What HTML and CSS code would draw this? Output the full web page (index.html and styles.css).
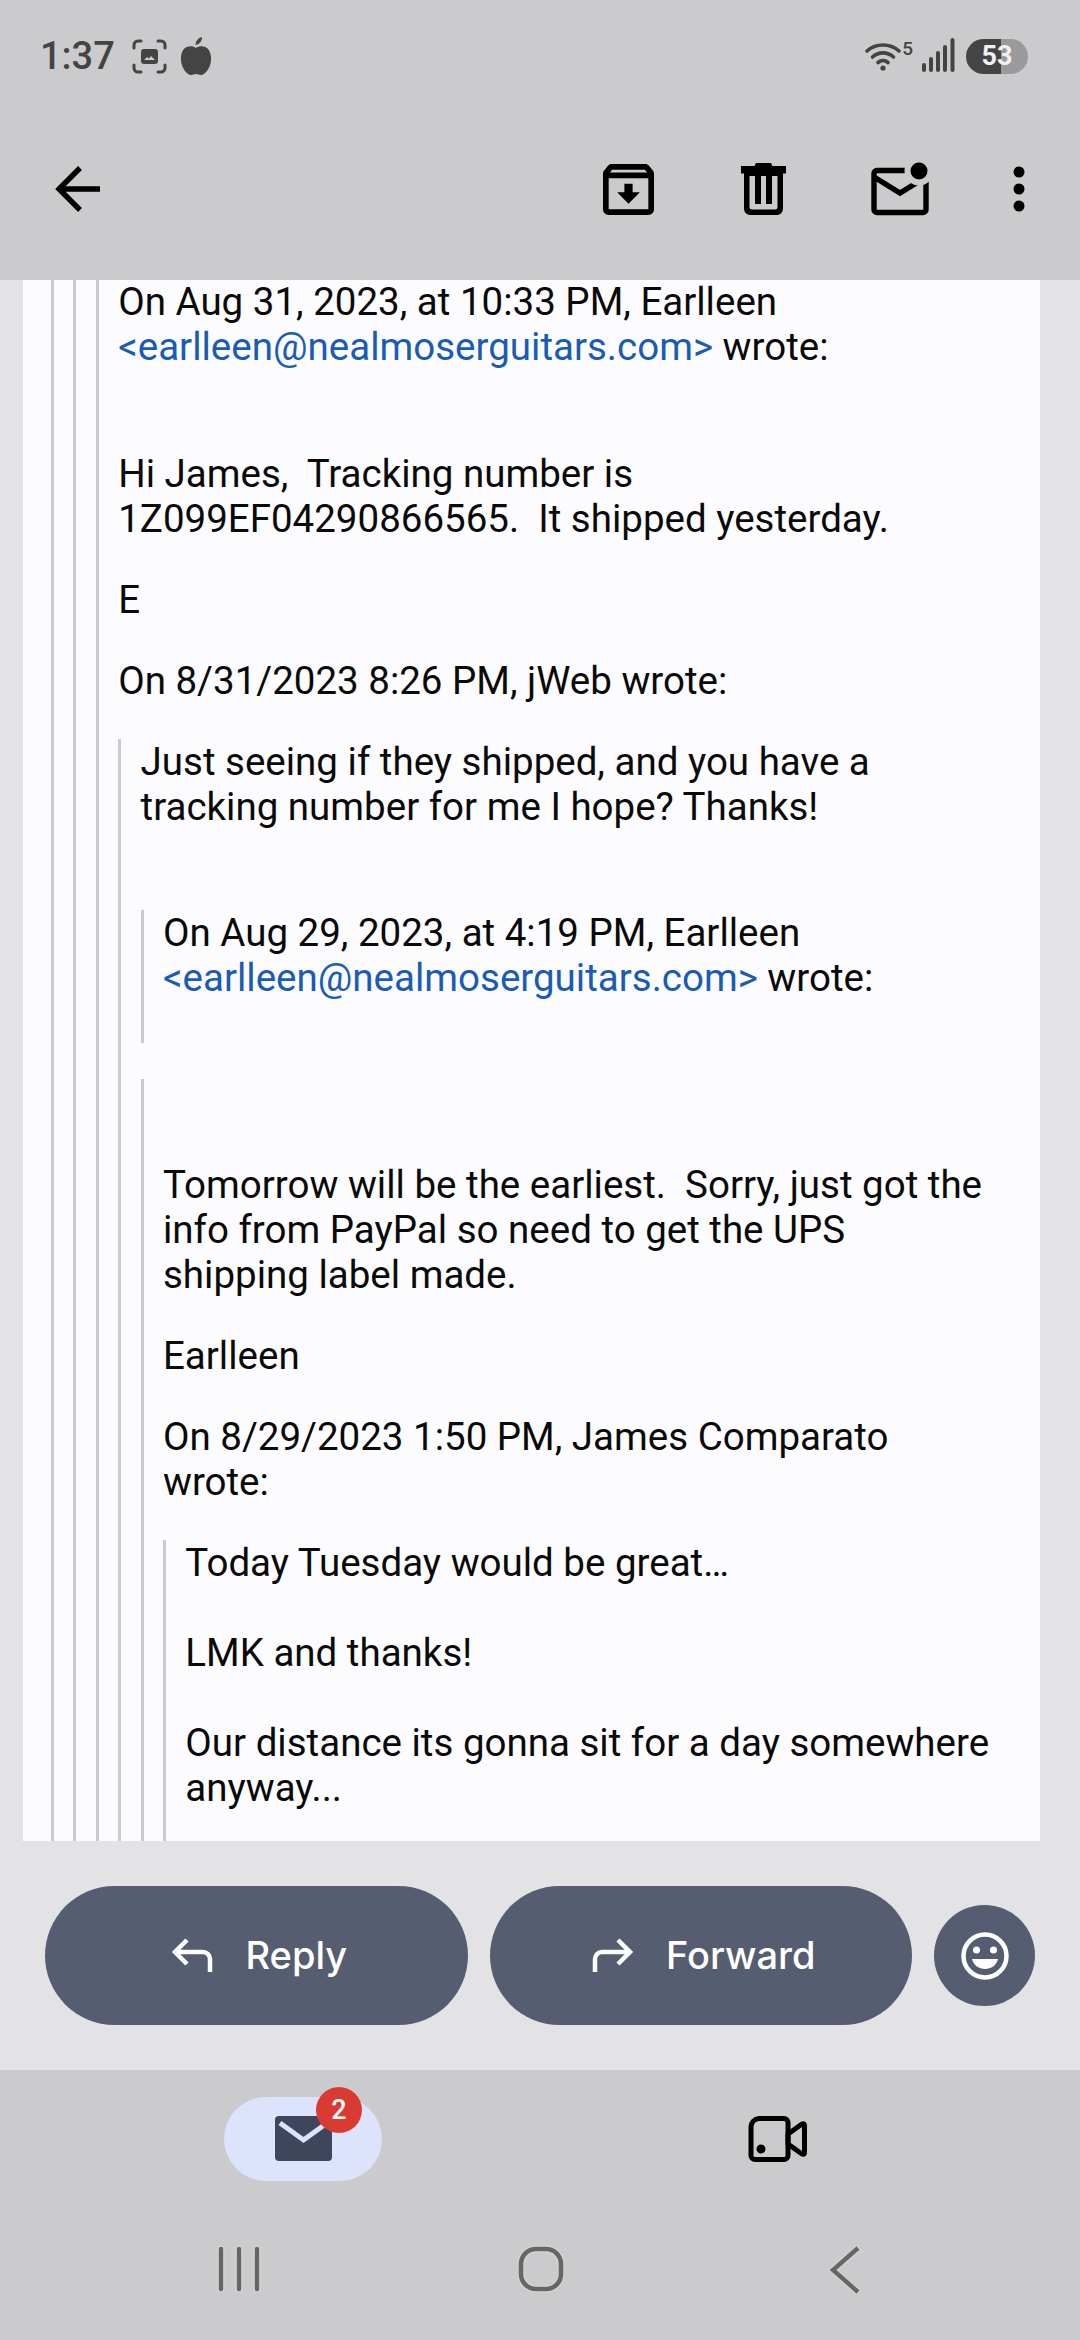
FILE: index.html
```html
<!DOCTYPE html>
<html lang="en">
<head>
    <meta charset="UTF-8">
    <title>Mail</title>
    <link rel="stylesheet" href="styles.css">
</head>
<body>

<div id="app">
    <div id="topArea">
        <div id="statusBar">
            <div class="statusLeft">
                <span id="clock">1:37</span>
                <svg class="shotIcon" viewBox="0 0 35 35" fill="none" stroke="#444" stroke-width="3" stroke-linecap="round">
                    <path d="M2 9V6a4 4 0 0 1 4-4h3M26 2h3a4 4 0 0 1 4 4v3M33 26v3a4 4 0 0 1-4 4h-3M9 33H6a4 4 0 0 1-4-4v-3"/>
                    <rect x="9" y="10" width="17" height="15" rx="3" fill="#444" stroke="none"/>
                    <path d="M12 21l3-3 2 1.500 2-2.500 4 4z" fill="#cbcbcd" stroke="none"/>
                </svg>
                <svg class="appleIcon" viewBox="0 0 32 38" fill="#444">
                    <path d="M16 11C12 8 2 8 1 20c-1 10 6 18 10 18 2 0 3-1 5-1s3 1 5 1c4 0 11-8 10-18C30 8 20 8 16 11z"/>
                    <path d="M15.500 8c0-4 2.500-7 6.500-8 0 4-2 7-6.500 8z"/>
                </svg>
            </div>
            <div class="statusRight">
                <svg class="wifiIcon" viewBox="0 0 36 30" fill="none" stroke="#444" stroke-width="3.600" stroke-linecap="round">
                    <path d="M2 10c9-8 23-8 32 0"/>
                    <path d="M7.500 16c6-5.500 15-5.500 21 0"/>
                    <path d="M13 21.500c3-2.500 7-2.500 10 0"/>
                    <circle cx="18" cy="27" r="2.600" fill="#444" stroke="none"/>
                </svg>
                <span class="wifiNum">5</span>
                <svg class="signalIcon" viewBox="0 0 33 34" fill="#444">
                    <rect x="0" y="25" width="4" height="9" rx="2"/>
                    <rect x="7" y="19" width="4" height="15" rx="2"/>
                    <rect x="14" y="13" width="4" height="21" rx="2"/>
                    <rect x="21" y="7" width="4" height="27" rx="2"/>
                    <rect x="28.500" y="0" width="4" height="34" rx="2"/>
                </svg>
                <div id="battery"><span>53</span></div>
            </div>
        </div>
        <div id="toolbar">
            <svg class="backIcon" viewBox="0 0 48 48" fill="none" stroke="#000" stroke-width="5.400">
                <path d="M46 24H5M26 3L5 24l21 21"/>
            </svg>
            <div class="toolIcons">
                <svg class="tool" viewBox="3 3 18 18" width="51" height="51" fill="#000">
                    <path d="M20.540 5.230l-1.390-1.680C18.880 3.210 18.470 3 18 3H6c-.47 0-.88.21-1.160.55L3.460 5.230C3.170 5.570 3 6.020 3 6.500V19c0 1.100.9 2 2 2h14c1.100 0 2-.9 2-2V6.500c0-.48-.17-.93-.46-1.270zM6.240 5h11.520l.83 1H5.420l.82-1zM5 19V8h14v11H5zm8.450-9h-2.900v3H8l4 4 4-4h-2.550z"/>
                </svg>
                <svg class="tool" viewBox="0 0 45 52" width="45" height="52" fill="#000">
                    <path d="M15 0h15l1.500 3H45v7.500H0V3h13.500z"/>
                    <path d="M3 10h39v36a6 6 0 0 1-6 6H9a6 6 0 0 1-6-6zm5.500 3v31a2.500 2.500 0 0 0 2.500 2.500h23a2.500 2.500 0 0 0 2.500-2.500V13z" fill-rule="evenodd"/>
                    <rect x="14" y="12" width="6" height="29"/>
                    <rect x="25" y="12" width="6" height="29"/>
                </svg>
                <svg class="tool" viewBox="0 0 58 54" width="58" height="54">
                    <rect x="3" y="8.500" width="52" height="42" rx="3" fill="none" stroke="#000" stroke-width="5.400"/>
                    <path d="M3 15l26 16 26-16" fill="none" stroke="#000" stroke-width="5.400"/>
                    <circle cx="48" cy="9" r="11.500" fill="#000" stroke="#cbcbcd" stroke-width="6"/>
                </svg>
                <svg class="tool" viewBox="0 0 12 46" width="12" height="46" fill="#000">
                    <circle cx="6" cy="6" r="5.500"/>
                    <circle cx="6" cy="23" r="5.500"/>
                    <circle cx="6" cy="40" r="5.500"/>
                </svg>
            </div>
        </div>
    </div>

    <div id="messageArea">
        <div id="messageCard">
            <blockquote class="firstQuote">
            <blockquote>
            <blockquote>
                <p class="wroteLine">On Aug 31, 2023, at 10:33 PM, Earlleen <a href="#">&lt;earlleen@nealmoserguitars.com&gt;</a> wrote:</p>
                <p>Hi James,&nbsp; Tracking number is 1Z099EF04290866565.&nbsp; It shipped yesterday.</p>
                <p>E</p>
                <p>On 8/31/2023 8:26 PM, jWeb wrote:</p>
                <blockquote>
                    <p class="noGap">Just seeing if they shipped, and you have a tracking number for me I hope? Thanks!</p>
                    <blockquote class="quoteHead">
                        <p class="noGap">On Aug 29, 2023, at 4:19 PM, Earlleen <a href="#">&lt;earlleen@nealmoserguitars.com&gt;</a> wrote:</p>
                    </blockquote>
                    <blockquote class="quoteBody">
                        <p>Tomorrow will be the earliest.&nbsp; Sorry, just got the info from PayPal so need to get the UPS shipping label made.</p>
                        <p>Earlleen</p>
                        <p>On 8/29/2023 1:50 PM, James Comparato wrote:</p>
                        <blockquote class="lastQuote">
                            <p class="tallGap">Today Tuesday would be great…</p>
                            <p class="tallGap">LMK and thanks!</p>
                            <p class="noGap">Our distance its gonna sit for a day somewhere anyway...</p>
                        </blockquote>
                    </blockquote>
                </blockquote>
            </blockquote>
            </blockquote>
            </blockquote>
        </div>
    </div>

    <div id="actions">
        <button class="actionBtn">
            <svg viewBox="0 0 42 34" width="42" height="34" fill="none" stroke="#fff" stroke-width="4.500">
                <path d="M16 2L4 14l12 12M4 14h28a7 7 0 0 1 7 7v13"/>
            </svg>
            Reply
        </button>
        <button class="actionBtn">
            <svg viewBox="0 0 42 34" width="42" height="34" fill="none" stroke="#fff" stroke-width="4.500">
                <path d="M26 2l12 12-12 12M38 14H10a7 7 0 0 0-7 7v13"/>
            </svg>
            Forward
        </button>
        <div class="emojiBtn">
            <svg viewBox="0 0 48 48" width="48" height="48">
                <circle cx="24" cy="24" r="21.500" fill="none" stroke="#fff" stroke-width="4.500"/>
                <circle cx="15.500" cy="18" r="3.500" fill="#fff"/>
                <circle cx="32.500" cy="18" r="3.500" fill="#fff"/>
                <path d="M11 27h26c-1.500 6.500-7 10-13 10s-11.500-3.500-13-10z" fill="#fff"/>
            </svg>
        </div>
    </div>

    <div id="tabBar">
        <div class="tabCell">
            <div class="mailPill">
                <svg viewBox="0 0 57 45" width="57" height="45">
                    <rect width="57" height="45" rx="4" fill="#3f465b"/>
                    <path d="M5 7l23.500 17L52 7" fill="none" stroke="#dde3fa" stroke-width="5"/>
                </svg>
                <span class="badge">2</span>
            </div>
        </div>
        <div class="tabCell">
            <svg viewBox="0 0 59 46" width="59" height="46" fill="none" stroke="#000" stroke-width="5">
                <path d="M11 2.500h25a4 4 0 0 1 4 4v33a4 4 0 0 1-4 4H7a4 4 0 0 1-4-4V11a8.500 8.500 0 0 1 8-8.500z"/>
                <path d="M40 18l14-10q2.500-1 2.500 1.500v27q0 2.500-2.500 1.500L40 28z" stroke-linejoin="round"/>
                <circle cx="13" cy="33" r="4.500" fill="#000" stroke="none"/>
            </svg>
        </div>
    </div>

    <div id="gestureBar">
        <svg viewBox="0 0 44 46" width="44" height="46" fill="none" stroke="#666" stroke-width="4.400" stroke-linecap="round">
            <path d="M4 3v40M22 3v40M40 3v40"/>
        </svg>
        <svg class="gestureHome" viewBox="0 0 46 46" width="46" height="46" fill="none" stroke="#666" stroke-width="4.600">
            <rect x="3" y="3" width="40" height="40" rx="15"/>
        </svg>
        <svg class="gestureBack" viewBox="0 0 32 48" width="32" height="48" fill="none" stroke="#666" stroke-width="4.400">
            <path d="M29 2L4 24l25 22"/>
        </svg>
    </div>
</div>

</body>
</html>
```

FILE: styles.css
```css
html, body {
    margin: 0;
    padding: 0;
    width: 1080px;
    height: 2340px;
    overflow: hidden;
    font-family: Roboto, "Liberation Sans", sans-serif;
}
#app {
    width: 1080px;
    height: 2340px;
    display: flex;
    flex-direction: column;
    background-color: #e3e3e5;
}

/* top */
#topArea {
    height: 280px;
    flex: none;
    background-color: #cbcbcd;
}
#statusBar {
    height: 112px;
    box-sizing: border-box;
    padding: 36px 52px 0 40px;
    display: flex;
    justify-content: space-between;
    align-items: flex-start;
    color: #444;
}
.statusLeft, .statusRight {
    display: flex;
    align-items: center;
}
#clock {
    font-size: 38px;
    line-height: 40px;
    font-weight: 500;
    width: 92px;
}
.shotIcon {
    width: 35px;
    height: 35px;
    margin-right: 13px;
}
.appleIcon {
    width: 32px;
    height: 38px;
}
.wifiIcon {
    width: 36px;
    height: 30px;
    margin-top: 2px;
}
.wifiNum {
    font-size: 19px;
    font-weight: 500;
    line-height: 19px;
    margin: -14px 9px 0 1px;
}
.signalIcon {
    width: 33px;
    height: 34px;
    margin-right: 11px;
}
#battery {
    width: 62px;
    height: 35px;
    margin-top: 3px;
    border-radius: 18px;
    background: linear-gradient(to right, #444 0, #444 56%, #9a9a9c 56%);
    color: #f0f0f0;
    font-size: 27px;
    font-weight: 700;
    text-align: center;
    line-height: 35px;
}
#toolbar {
    height: 154px;
    box-sizing: border-box;
    padding: 0 55px 0 54px;
    display: flex;
    justify-content: space-between;
    align-items: center;
}
.backIcon {
    width: 48px;
    height: 48px;
}
.toolIcons {
    display: flex;
    align-items: center;
}
.tool:nth-child(1) { margin-right: 87px; }
.tool:nth-child(2) { margin-right: 85px; }
.tool:nth-child(3) { margin-right: 84px; }

/* message */
#messageArea {
    flex: none;
    height: 1561px;
    padding: 0 40px 0 23px;
}
#messageCard {
    height: 100%;
    overflow: hidden;
    background-color: #fcfcff;
    padding: 0 48px 0 28px;
    font-size: 38.5px;
    line-height: 45px;
    color: #0a0a0a;
}
#messageCard a {
    color: #1a5bb5;
    text-decoration: none;
}
#messageCard p {
    margin: 0 0 36px;
}
#messageCard p.wroteLine {
    margin-bottom: 82px;
}
#messageCard p.noGap {
    margin-bottom: 0;
}
#messageCard p.tallGap {
    margin-bottom: 45px;
}
blockquote {
    margin: 0;
    padding-left: 19.4px;
    border-left: 3px solid #cbcbcd;
}
.firstQuote {
    margin-top: -1px;
}
.quoteHead {
    margin-top: 81px;
    padding-bottom: 43px;
}
.quoteBody {
    margin-top: 36px;
    padding-top: 83px;
}
.lastQuote {
    padding-bottom: 80px;
}

/* reply and forward */
#actions {
    flex: none;
    height: 229px;
    box-sizing: border-box;
    padding: 45px 45px 0;
    display: flex;
    align-items: flex-start;
}
.actionBtn {
    width: 423px;
    height: 139px;
    margin-right: 22px;
    padding: 0 0 2px 6px;
    border: none;
    border-radius: 70px;
    background-color: #565d71;
    color: #fff;
    font-family: Inter, Roboto, sans-serif;
    font-size: 38px;
    font-weight: 500;
    display: flex;
    align-items: center;
    justify-content: center;
    gap: 32px;
}
.emojiBtn {
    width: 101px;
    height: 101px;
    margin-top: 19px;
    border-radius: 50%;
    background-color: #565d71;
    display: flex;
    align-items: center;
    justify-content: center;
}

/* bottom */
#tabBar {
    flex: none;
    height: 140px;
    box-sizing: border-box;
    padding: 0 66px 3px;
    display: grid;
    grid-template-columns: 1fr 1fr;
    background-color: #cbcbcd;
}
.tabCell {
    display: flex;
    align-items: center;
    justify-content: center;
}
.mailPill {
    position: relative;
    width: 158px;
    height: 84px;
    border-radius: 42px;
    background-color: #dde3fa;
    display: flex;
    align-items: center;
    justify-content: center;
}
.badge {
    position: absolute;
    top: -10px;
    right: 20px;
    width: 46px;
    height: 46px;
    border-radius: 50%;
    background-color: #d93a32;
    color: #fff;
    font-size: 27px;
    font-weight: 500;
    line-height: 46px;
    text-align: center;
}
#gestureBar {
    flex: none;
    height: 130px;
    box-sizing: border-box;
    padding: 36px 88px 0;
    display: grid;
    grid-template-columns: repeat(3, 1fr);
    justify-items: center;
    align-items: start;
    background-color: #cbcbcd;
}
#gestureBar svg {
    filter: drop-shadow(0 0 1px rgba(255, 255, 255, 0.6));
}
.gestureHome {
    margin-left: 2px;
}
.gestureBack {
    margin-left: 8px;
}
```
